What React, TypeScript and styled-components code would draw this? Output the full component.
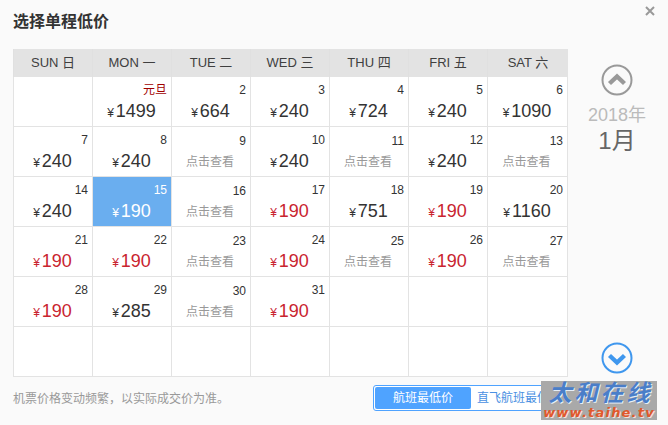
import React from "react";
import styled, { createGlobalStyle } from "styled-components";

const Global = createGlobalStyle`
  html, body { margin: 0; padding: 0; width: 668px; height: 425px; overflow: hidden; background: #fafafa; }
  body { font-family: "Liberation Sans", "Noto Sans CJK SC", sans-serif; color: #333; }
`;

const Dialog = styled.div`
  position: relative;
  width: 668px;
  height: 425px;
  box-sizing: border-box;
  padding: 12px 0 0 13px;
  background: #fafafa;
  overflow: hidden;
`;
const Title = styled.h2`
  margin: 0;
  height: 37px;
  font-size: 16px;
  line-height: 20px;
  font-weight: 700;
  color: #333;
`;
const Close = styled.button`
  position: absolute;
  top: 4px;
  right: 11px;
  width: 14px;
  height: 14px;
  padding: 0;
  border: 0;
  background: none;
  display: flex;
`;
const Body = styled.div`
  display: flex;
  align-items: flex-start;
`;
const Calendar = styled.div`
  width: 555px;
  display: grid;
  grid-template-columns: repeat(6, 79px) 81px;
`;
const HeadCell = styled.div`
  height: 28px;
  background: #e3e3e3;
  border-left: 1px solid #e0e0e0;
  box-sizing: border-box;
  text-align: center;
  font-size: 13px;
  line-height: 28px;
  color: #3f3f3f;
`;
const Cell = styled.div<{ $active?: boolean; $lastCol?: boolean }>`
  height: 50px;
  box-sizing: border-box;
  padding: 6px 4px 0 0;
  border-left: 1px solid #e3e3e3;
  border-bottom: 1px solid #e3e3e3;
  border-right: ${(p) => (p.$lastCol ? "1px solid #e3e3e3" : "0")};
  background: ${(p) => (p.$active ? "#6aaeef" : "#fff")};
  color: ${(p) => (p.$active ? "#fff" : "#333")};
  text-align: right;
`;
const Day = styled.div<{ $holiday?: boolean; $low?: boolean }>`
  font-size: 12px;
  line-height: 14px;
  padding-top: ${(p) => (p.$low ? 1 : 0)}px;
  color: ${(p) => (p.$holiday ? "#a00000" : "inherit")};
`;
const Price = styled.div<{ $red?: boolean }>`
  text-align: center;
  margin-top: 3px;
  line-height: 22px;
  font-size: 18px;
  padding-left: 3px;
  color: ${(p) => (p.$red ? "#c9242f" : "inherit")};
`;
const Yen = styled.span`
  font-size: 12px;
  margin-right: 2px;
`;
const Check = styled.div`
  text-align: center;
  margin-top: 5px;
  padding-left: 2px;
  line-height: 18px;
  font-size: 12px;
  color: #999;
`;
const Side = styled.div`
  width: 98px;
  height: 325px;
  display: flex;
  flex-direction: column;
  align-items: center;
  padding-top: 15px;
  box-sizing: border-box;
`;
const Year = styled.div`
  margin-top: 9px;
  font-size: 18px;
  line-height: 20px;
  color: #bbb;
`;
const Month = styled.div`
  font-size: 24px;
  line-height: 32px;
  color: #666;
`;
const Spacer = styled.div`
  flex: 1;
`;
const Footer = styled.div`
  display: flex;
  align-items: center;
  margin-top: 8px;
`;
const Note = styled.div`
  width: 360px;
  padding-top: 2px;
  font-size: 12px;
  color: #999;
  line-height: 24px;
`;
const Toggle = styled.div`
  width: 196px;
  height: 26px;
  box-sizing: border-box;
  border: 1px solid #4fa3ff;
  border-radius: 3px;
  padding: 1px;
  display: flex;
  background: #fff;
`;
const ToggleItem = styled.div<{ $on?: boolean }>`
  width: ${(p) => (p.$on ? "96px" : "auto")};
  font-size: 12px;
  line-height: 22px;
  text-align: center;
  white-space: nowrap;
  padding: ${(p) => (p.$on ? "0" : "0 0 0 6px")};
  border-radius: 2px;
  color: ${(p) => (p.$on ? "#fff" : "#4a90e2")};
  background: ${(p) => (p.$on ? "#4fa3ff" : "transparent")};
`;
const Mark = styled.div`
  position: absolute;
  left: 541px;
  top: 381px;
  width: 116px;
  height: 39px;
  background: #a9a9a9;
  display: flex;
  flex-direction: column;
  align-items: center;
  font-style: italic;
  font-weight: 700;
`;
const MarkCn = styled.div`
  font-size: 23px;
  line-height: 24px;
  letter-spacing: 3px;
  margin-right: -3px;
  color: #4a7ec8;
  text-shadow: 1px 1px 0 #e6eef8;
`;
const MarkEn = styled.div`
  font-size: 13px;
  line-height: 15px;
  letter-spacing: 1.2px;
  color: #e2582c;
  text-shadow: 1px 1px 0 #f3e3da;
  font-family: "DejaVu Sans", sans-serif;
`;

const Arrow = ({ up, color }: { up?: boolean; color: string }) => (
  <svg width="32" height="32" viewBox="0 0 32 32">
    <circle cx="16" cy="16" r="14.5" fill="none" stroke={color} strokeWidth="2" />
    <path
      d={up ? "M8.5 19.5 L16 12.5 L23.5 19.5" : "M8.5 13.5 L16 20.5 L23.5 13.5"}
      fill="none"
      stroke={color}
      strokeWidth="4.4"
    />
  </svg>
);

type D = { d?: number; label?: string; price?: number; red?: boolean; active?: boolean };
const cells: D[] = [
  {},
  { d: 1, label: "元旦", price: 1499 },
  { d: 2, price: 664 },
  { d: 3, price: 240 },
  { d: 4, price: 724 },
  { d: 5, price: 240 },
  { d: 6, price: 1090 },
  { d: 7, price: 240 },
  { d: 8, price: 240 },
  { d: 9 },
  { d: 10, price: 240 },
  { d: 11 },
  { d: 12, price: 240 },
  { d: 13 },
  { d: 14, price: 240 },
  { d: 15, price: 190, active: true },
  { d: 16 },
  { d: 17, price: 190, red: true },
  { d: 18, price: 751 },
  { d: 19, price: 190, red: true },
  { d: 20, price: 1160 },
  { d: 21, price: 190, red: true },
  { d: 22, price: 190, red: true },
  { d: 23 },
  { d: 24, price: 190, red: true },
  { d: 25 },
  { d: 26, price: 190, red: true },
  { d: 27 },
  { d: 28, price: 190, red: true },
  { d: 29, price: 285 },
  { d: 30 },
  { d: 31, price: 190, red: true },
  {}, {}, {},
  {}, {}, {}, {}, {}, {}, {},
];
const heads = ["SUN 日", "MON 一", "TUE 二", "WED 三", "THU 四", "FRI 五", "SAT 六"];

export default function App() {
  return (
    <Dialog>
      <Global />
      <Title>选择单程低价</Title>
      <Close aria-label="关闭">
        <svg width="14" height="14" viewBox="0 0 14 14">
          <path d="M3 3 L11 11 M11 3 L3 11" stroke="#999" strokeWidth="2" fill="none" />
        </svg>
      </Close>
      <Body>
        <Calendar>
          {heads.map((h) => (
            <HeadCell key={h}>{h}</HeadCell>
          ))}
          {cells.map((c, i) => (
            <Cell key={i} $active={c.active} $lastCol={i % 7 === 6}>
              {c.d !== undefined && (
                <Day $holiday={!!c.label} $low={c.price === undefined}>
                  {c.label ?? c.d}
                </Day>
              )}
              {c.price !== undefined && (
                <Price $red={c.red}>
                  <Yen>¥</Yen>
                  {c.price}
                </Price>
              )}
              {c.d !== undefined && c.price === undefined && <Check>点击查看</Check>}
            </Cell>
          ))}
        </Calendar>
        <Side>
          <Arrow up color="#999" />
          <Year>2018年</Year>
          <Month>1月</Month>
          <Spacer />
          <Arrow color="#3f97ee" />
        </Side>
      </Body>
      <Footer>
        <Note>机票价格变动频繁，以实际成交价为准。</Note>
        <Toggle>
          <ToggleItem $on>航班最低价</ToggleItem>
          <ToggleItem>直飞航班最低价</ToggleItem>
        </Toggle>
      </Footer>
      <Mark>
        <MarkCn>太和在线</MarkCn>
        <MarkEn>www.taihe.tv</MarkEn>
      </Mark>
    </Dialog>
  );
}
